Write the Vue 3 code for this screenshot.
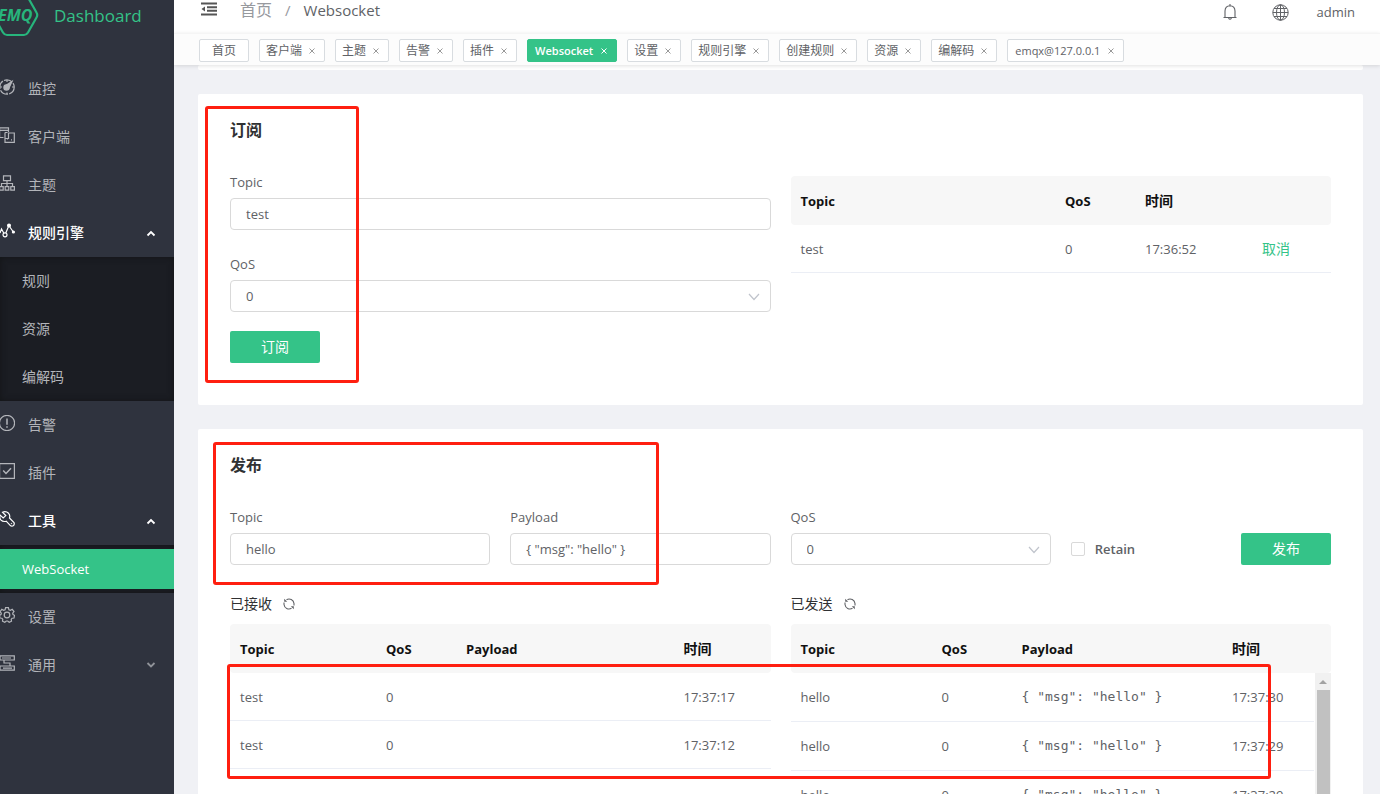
<script setup>
import { ref } from 'vue'

const menuTop = [
  { icon: 'gauge', label: '监控' },
  { icon: 'clients', label: '客户端' },
  { icon: 'topics', label: '主题' },
  { icon: 'rules', label: '规则引擎', open: true, children: [{ label: '规则' }, { label: '资源' }, { label: '编解码' }] },
  { icon: 'alarm', label: '告警' },
  { icon: 'plugins', label: '插件' },
  { icon: 'tools', label: '工具', open: true, children: [{ label: 'WebSocket', active: true }] },
  { icon: 'settings', label: '设置' },
  { icon: 'general', label: '通用', closed: true },
]

const tags = ['客户端', '主题', '告警', '插件', 'Websocket', '设置', '规则引擎', '创建规则', '资源', '编解码', 'emqx@127.0.0.1']
const isLatin = (s) => /^[\x20-\x7e]+$/.test(s)

const subTopic = ref('test')
const subQos = ref('0')
const pubTopic = ref('hello')
const pubPayload = ref('{ "msg": "hello" }')
const pubQos = ref('0')
const retain = ref(false)

const received = [
  { topic: 'test', qos: 0, time: '17:37:17' },
  { topic: 'test', qos: 0, time: '17:37:12' },
]
const sent = [
  { topic: 'hello', qos: 0, payload: '{ "msg": "hello" }', time: '17:37:30' },
  { topic: 'hello', qos: 0, payload: '{ "msg": "hello" }', time: '17:37:29' },
  { topic: 'hello', qos: 0, payload: '{ "msg": "hello" }', time: '17:37:29' },
]
</script>

<template>
  <div class="page">
    <aside class="sidebar">
      <a class="brand" href="#">
        <svg class="logo" width="40" height="37" viewBox="0 0 40 37" aria-hidden="true">
          <path d="M5 -5H24Q26.500 -5 28 -2.500L36.500 12.500Q38 15 36.500 17.500L28 32.500Q26.500 35 24 35H7Q4.500 35 3 32.500L-7 15" fill="none" stroke="#27b57c" stroke-width="2.200" />
          <text x="-2" y="20.500" class="logo-text">EMQ</text>
        </svg>
        <span>Dashboard</span>
      </a>
      <nav>
        <ul class="menu">
          <li v-for="m in menuTop" :key="m.label">
            <a class="item" :class="{ open: m.open }" href="#">
              <svg class="ico" width="16" height="16" viewBox="0 0 16 16" fill="none" stroke="currentColor" stroke-width="1.200">
                <template v-if="m.icon === 'gauge'">
                  <circle cx="8" cy="8" r="7.200" stroke-dasharray="9 1.200" />
                  <circle cx="7.500" cy="8.500" r="2.600" fill="currentColor" />
                  <path d="M6 7L13 2.500L9.500 10Z" fill="currentColor" />
                  <path d="M8 1V3M1 8H3M13 8H15M8 13.500V15" />
                </template>
                <template v-else-if="m.icon === 'clients'">
                  <path d="M4.500 10.500H.6V.8H9.500V5M.6 3.400H9.500M6 5.500H8.500M6 5.500V11" />
                  <path d="M12 6H15.300V15.300H6V11.500H9.500V6H12M8.500 12.500V13M12 12.800H13" />
                </template>
                <template v-else-if="m.icon === 'topics'">
                  <path d="M4.500 .8H11.500V5.600H4.500ZM8 5.600V11.500M2.500 11.500V8.500H13.500V11.500" />
                  <path d="M.6 11.600H4.200V15.200H.6ZM6.200 11.600H9.800V15.200H6.200ZM11.800 11.600H15.400V15.200H11.800Z" />
                </template>
                <template v-else-if="m.icon === 'rules'">
                  <path d="M1 10L2.500 6L5 10.500M6.800 10L9.500 3.500M10.500 3.500L14 8.500" />
                  <circle cx="6" cy="11.800" r="2" />
                  <circle cx="10" cy="2.500" r="1.400" fill="currentColor" />
                  <circle cx="14.400" cy="9" r="1" fill="currentColor" />
                </template>
                <template v-else-if="m.icon === 'alarm'">
                  <circle cx="8" cy="8" r="7.600" />
                  <path d="M8 3.500V9.800M8 11.200V12.800" stroke-width="1.500" />
                </template>
                <template v-else-if="m.icon === 'plugins'">
                  <path d="M.6 .6H15.400V15.400H.6Z" />
                  <path d="M4.200 7.500L7 10.400L12 5.200" stroke-width="1.500" />
                </template>
                <template v-else-if="m.icon === 'tools'">
                  <path d="M3.500 1.200Q7 -.2 9.600 2.300Q11.300 4.200 10.500 7L15 11.600Q15.700 13.200 14.600 14.500Q13 15.700 11.600 14.800L7.200 10.200Q4 11.200 1.800 8.800Q.2 6.800 1 4L4.200 7L6.800 4.600Z" />
                  <path d="M12.200 12.200L12.800 12.800" stroke-width="1.600" />
                </template>
                <template v-else-if="m.icon === 'settings'">
                  <circle cx="8" cy="8" r="2.800" />
                  <path d="M6.600 .7H9.400L9.900 2.700L11.400 3.300L13.200 2.300L15 4.600L13.700 6.200L14 7.500L15.500 8.300L15 11L13.100 11.200L12.200 12.400L12.500 14.200L10.200 15.300L8.700 14H7.300L5.800 15.300L3.500 14.200L3.800 12.400L2.900 11.200L1 11L.5 8.300L2 7.500L2.300 6.200L1 4.600L2.800 2.300L4.600 3.300L6.100 2.700Z" />
                </template>
                <template v-else>
                  <path d="M1 .8H15.300V5H1ZM1 11H15.300V15.200H1ZM5 5V8H11V11M3 3H12M4 13.200H13" />
                </template>
              </svg>
              <span class="label">{{ m.label }}</span>
              <svg v-if="m.open || m.closed" class="arrow" :class="{ dim: m.closed }" width="10" height="10" viewBox="0 0 10 10" fill="none" stroke="currentColor" stroke-width="1.800">
                <path :d="m.open ? 'M1.500 7.500L5 4L8.500 7.500' : 'M1.500 3L5 6.500L8.500 3'" />
              </svg>
            </a>
            <ul v-if="m.children" class="sub">
              <li v-for="c in m.children" :key="c.label">
                <a href="#" :class="{ active: c.active }">{{ c.label }}</a>
              </li>
            </ul>
          </li>
        </ul>
      </nav>
    </aside>

    <div class="main">
      <header class="topbar">
        <button class="plain" type="button" aria-label="menu">
          <svg width="16" height="14" viewBox="0 0 16 14" fill="none" stroke="#555" stroke-width="2">
            <path d="M0 1.500H16M6 5.200H16M6 8.800H16M0 12.500H16" />
            <path d="M4 4.500V9.500L.5 7Z" fill="#555" stroke="none" />
          </svg>
        </button>
        <div class="crumbs">
          <a href="#">首页</a><span class="slash">/</span><span class="here">Websocket</span>
        </div>
        <div class="tools">
          <button class="plain bell" type="button" aria-label="alerts">
            <svg width="16" height="18" viewBox="0 0 16 18" fill="none" stroke="#606266" stroke-width="1.100">
              <path d="M1.500 14.500H14.500M3 14.500V8Q3.200 3 8 2.800Q12.800 3 13 8V14.500M8 1V2.800M6.500 15Q8 17.500 9.500 15" />
            </svg>
          </button>
          <button class="plain" type="button" aria-label="language">
            <svg width="17" height="17" viewBox="0 0 17 17" fill="none" stroke="#606266" stroke-width="1">
              <circle cx="8.500" cy="8.500" r="7.700" />
              <ellipse cx="8.500" cy="8.500" rx="4" ry="7.700" />
              <path d="M8.500 .8V16.200M.8 8.500H16.200M2 4.500H15M2 12.500H15" />
            </svg>
          </button>
          <a class="user" href="#">admin</a>
        </div>
      </header>

      <div class="tags">
        <a class="tag home" href="#">首页</a>
        <a v-for="t in tags" :key="t" class="tag" :class="{ on: t === 'Websocket', latin: isLatin(t) }" href="#">
          {{ t }}
          <svg width="6" height="6" viewBox="0 0 6 6" fill="none" stroke="currentColor" stroke-width="1"><path d="M.5 .5L5.500 5.500M5.500 .5L.5 5.500" /></svg>
        </a>
      </div>

      <main class="content">
        <section class="card stub"></section>

        <section class="card">
          <h2>订阅</h2>
          <div class="halves">
            <form class="fields" @submit.prevent>
              <div class="field">
                <label for="sub-topic">Topic</label>
                <input id="sub-topic" v-model="subTopic" type="text" />
              </div>
              <div class="field">
                <label for="sub-qos">QoS</label>
                <div class="select">
                  <select id="sub-qos" v-model="subQos"><option>0</option><option>1</option><option>2</option></select>
                  <svg width="12" height="8" viewBox="0 0 12 8" fill="none" stroke="#c0c4cc" stroke-width="1.200"><path d="M1 1L6 6.500L11 1" /></svg>
                </div>
              </div>
              <button class="primary" type="submit">订阅</button>
            </form>
            <div class="subs">
              <table>
                <colgroup><col /><col class="c-qos" /><col class="c-when" /><col class="c-act" /></colgroup>
                <thead><tr><th>Topic</th><th>QoS</th><th class="zh">时间</th><th></th></tr></thead>
                <tbody><tr><td>test</td><td>0</td><td>17:36:52</td><td class="zh"><a class="cancel" href="#">取消</a></td></tr></tbody>
              </table>
            </div>
          </div>
        </section>

        <section class="card">
          <h2>发布</h2>
          <form class="quarters" @submit.prevent>
            <div class="field">
              <label for="pub-topic">Topic</label>
              <input id="pub-topic" v-model="pubTopic" type="text" />
            </div>
            <div class="field">
              <label for="pub-payload">Payload</label>
              <input id="pub-payload" v-model="pubPayload" type="text" />
            </div>
            <div class="field">
              <label for="pub-qos">QoS</label>
              <div class="select">
                <select id="pub-qos" v-model="pubQos"><option>0</option><option>1</option><option>2</option></select>
                <svg width="12" height="8" viewBox="0 0 12 8" fill="none" stroke="#c0c4cc" stroke-width="1.200"><path d="M1 1L6 6.500L11 1" /></svg>
              </div>
            </div>
            <div class="send">
              <label class="check" for="retain"><input id="retain" v-model="retain" type="checkbox" />Retain</label>
              <button class="primary" type="submit">发布</button>
            </div>
          </form>

          <div class="halves logs">
            <div>
              <h3>已接收
                <button class="plain" type="button" aria-label="refresh">
                  <svg width="12" height="12" viewBox="0 0 12 12" fill="none" stroke="#606266" stroke-width="1.100"><path d="M3.500 1.700A5 5 0 0 1 11 5.500M8.500 10.300A5 5 0 0 1 1 6.500V4.500M11 5.500V7.500" /><path d="M1.200 .8V3.800H4.200ZM10.800 11.200V8.200H7.800Z" fill="#606266" stroke="none" /></svg>
                </button>
              </h3>
              <table>
                <colgroup><col class="c-topic" /><col class="c-qos" /><col /><col class="c-time" /></colgroup>
                <thead><tr><th>Topic</th><th>QoS</th><th>Payload</th><th class="zh">时间</th></tr></thead>
                <tbody>
                  <tr v-for="r in received" :key="r.time"><td>{{ r.topic }}</td><td>{{ r.qos }}</td><td></td><td>{{ r.time }}</td></tr>
                </tbody>
              </table>
            </div>
            <div>
              <h3>已发送
                <button class="plain" type="button" aria-label="refresh">
                  <svg width="12" height="12" viewBox="0 0 12 12" fill="none" stroke="#606266" stroke-width="1.100"><path d="M3.500 1.700A5 5 0 0 1 11 5.500M8.500 10.300A5 5 0 0 1 1 6.500V4.500M11 5.500V7.500" /><path d="M1.200 .8V3.800H4.200ZM10.800 11.200V8.200H7.800Z" fill="#606266" stroke="none" /></svg>
                </button>
              </h3>
              <table>
                <colgroup><col class="c-topic2" /><col class="c-qos" /><col /><col class="c-time2" /><col class="c-gutter" /></colgroup>
                <thead><tr><th>Topic</th><th>QoS</th><th>Payload</th><th class="zh">时间</th><th></th></tr></thead>
              </table>
              <div class="scroller">
                <table class="tall">
                  <colgroup><col class="c-topic2" /><col class="c-qos" /><col /><col class="c-time2" /></colgroup>
                  <tbody>
                    <tr v-for="(r, i) in sent" :key="i"><td>{{ r.topic }}</td><td>{{ r.qos }}</td><td class="mono">{{ r.payload }}</td><td>{{ r.time }}</td></tr>
                  </tbody>
                </table>
                <div class="bar">
                  <svg width="16" height="17" viewBox="0 0 16 17"><path d="M4 11H12L8 7Z" fill="#a3a3a3" /></svg>
                  <div class="thumb"></div>
                </div>
              </div>
            </div>
          </div>
        </section>
      </main>
    </div>

    <div class="mark mark-sub"></div>
    <div class="mark mark-pub"></div>
    <div class="mark mark-log"></div>
  </div>
</template>

<style>
body {
  margin: 0;
}
</style>

<style scoped>
* {
  box-sizing: border-box;
}
.page {
  position: relative;
  display: flex;
  height: 100vh;
  overflow: hidden;
  background: #f0f1f5;
  color: #606266;
  font: 13px/24px "Open Sans", "Noto Sans CJK SC", sans-serif;
}
a {
  color: inherit;
  text-decoration: none;
}
ul {
  margin: 0;
  padding: 0;
  list-style: none;
}
button,
input,
select {
  font: inherit;
  color: inherit;
}
.plain {
  display: inline-flex;
  padding: 0;
  border: 0;
  background: none;
}

.sidebar {
  flex: none;
  width: 174px;
  overflow: hidden;
  background: #2f333e;
  color: #b3b5ba;
  font-size: 14px;
}
.brand {
  display: flex;
  gap: 14px;
  height: 65px;
  color: #34c388;
  font-size: 17px;
  line-height: 32px;
}
.logo-text {
  fill: #27b57c;
  font: italic 700 16px "Open Sans", sans-serif;
}
.item {
  display: flex;
  align-items: center;
  height: 48px;
  padding-right: 18px;
}
.item.open {
  color: #fff;
}
.ico {
  flex: none;
  margin: 0 13px 4px -1px;
}
.label {
  flex: 1;
}
.item.open .label {
  font-weight: 500;
}
.arrow.dim {
  color: #909399;
}
.sub {
  background: #1b1d23;
  box-shadow: inset 0 0 6px #131417;
}
.sub li {
  padding: 4px 0;
}
.sub a {
  display: block;
  padding-left: 22px;
  line-height: 40px;
}
.sub .active {
  background: #34c388;
  color: #fff;
  font-size: 13px;
}

.main {
  flex: 1;
  display: flex;
  flex-direction: column;
  min-width: 0;
}
.topbar {
  display: flex;
  align-items: flex-start;
  flex: none;
  height: 33px;
  padding: 2px 25px 0 27px;
  background: #fff;
}
.crumbs {
  display: flex;
  margin-left: 23px;
  font-size: 15px;
  line-height: 16px;
}
.crumbs a {
  color: #97999e;
  font-size: 16px;
}
.slash {
  margin: 0 13px;
  color: #97999e;
}
.tools {
  display: flex;
  align-items: center;
  gap: 28px;
  margin-left: auto;
}
.bell {
  margin-right: 6px;
}
.user {
  line-height: 20px;
}
.tags {
  position: relative;
  display: flex;
  align-items: center;
  gap: 10px;
  flex: none;
  height: 32px;
  padding: 2px 25px 0;
  border-top: 1px solid #f5f5f5;
  background: #fcfcfc;
  box-shadow: 0 1px 4px rgba(0, 0, 0, 0.12);
}
.tag {
  display: flex;
  align-items: center;
  gap: 7px;
  height: 23px;
  padding: 0 9px 0 6px;
  border: 1px solid #d8dce0;
  border-radius: 2px;
  background: #fff;
  font-size: 12px;
  line-height: 20px;
  white-space: nowrap;
}
.tag svg {
  color: #999;
}
.tag.home {
  padding: 0 12px;
}
.tag.latin {
  gap: 8px;
  padding-left: 7px;
  font-size: 11px;
}
.tag.on {
  border-color: #34c388;
  background: #34c388;
  color: #fff;
  font-weight: 600;
}
.tag.on svg {
  color: #fff;
}

.content {
  display: flex;
  flex-direction: column;
  gap: 24px;
  flex: 1;
  min-height: 0;
  overflow: hidden;
  padding: 0 17px 0 24px;
}
.card {
  flex: none;
  padding: 24px 32px 42px;
  border-radius: 2px;
  background: #fff;
}
.card.stub {
  height: 5px;
  padding: 0;
}
h2 {
  margin: 0 0 28px;
  color: #303133;
  font-size: 16px;
  font-weight: 700;
  line-height: 24px;
}
h3 {
  display: flex;
  align-items: center;
  gap: 11px;
  margin: 0 0 8px;
  color: #303133;
  font-size: 14px;
  font-weight: 400;
  line-height: 24px;
}
.halves {
  display: grid;
  grid-template-columns: 1fr 1fr;
  gap: 20px;
}
.quarters {
  display: grid;
  grid-template-columns: repeat(4, 1fr);
  gap: 20px;
}
.field label {
  display: block;
  margin-bottom: 4px;
}
.fields .field {
  margin-bottom: 22px;
}
.fields .field:nth-child(2) {
  margin-bottom: 19px;
}
.field input,
.select select {
  display: block;
  width: 100%;
  height: 32px;
  padding: 0 15px;
  border: 1px solid #d9d9d9;
  border-radius: 4px;
  background: #fff;
  appearance: none;
  outline: none;
}
.select {
  position: relative;
}
.select svg {
  position: absolute;
  top: 13px;
  right: 11px;
}
.primary {
  width: 90px;
  height: 32px;
  padding: 0;
  border: 0;
  border-radius: 2px;
  background: #34c388;
  color: #fff;
  font-size: 14px;
}
.fields .primary {
  display: block;
}
.subs {
  padding-top: 6px;
}
.send {
  display: flex;
  align-items: center;
  justify-content: space-between;
  align-self: end;
}
.check {
  display: flex;
  align-items: center;
  gap: 10px;
  font-weight: 600;
}
.check input {
  width: 14px;
  height: 14px;
  margin: 0;
  border: 1px solid #d9d9d9;
  border-radius: 2px;
  background: #fff;
  appearance: none;
}
.check input:checked {
  background: #34c388;
}
.logs {
  margin-top: 27px;
}

table {
  width: 100%;
  border-collapse: separate;
  border-spacing: 0;
  table-layout: fixed;
}
th,
td {
  height: 48px;
  padding: 0 10px;
  text-align: left;
  white-space: nowrap;
}
th {
  height: 49px;
  background: #f7f7f7;
  color: #111;
  font-weight: 700;
}
th:first-child {
  border-radius: 4px 0 0 4px;
}
th:last-child {
  border-radius: 0 4px 4px 0;
}
td {
  border-bottom: 1px solid #ebeef5;
}
.tall td {
  height: 49px;
}
.zh {
  font-size: 14px;
}
.mono {
  font-family: "DejaVu Sans Mono", monospace;
}
.cancel {
  color: #34c388;
}
.c-qos {
  width: 80px;
}
.c-when {
  width: 117px;
}
.c-act {
  width: 79px;
}
.c-topic {
  width: 146px;
}
.c-time {
  width: 97px;
}
.c-topic2 {
  width: 141px;
}
.c-time2 {
  width: 92px;
}
.c-gutter {
  width: 17px;
}
.scroller {
  display: flex;
  gap: 1px;
  height: 200px;
  overflow: hidden;
}
.scroller table {
  flex: 1;
  min-width: 0;
  align-self: flex-start;
}
.bar {
  display: flex;
  flex-direction: column;
  flex: none;
  width: 16px;
  background: #f1f1f1;
}
.thumb {
  flex: 1;
  margin: 0 1px 0 2px;
  background: #c1c1c1;
}

.mark {
  position: absolute;
  border: 3px solid #ff1f10;
  border-radius: 3px;
  pointer-events: none;
}
.mark-sub {
  left: 205px;
  top: 106px;
  width: 154px;
  height: 277px;
}
.mark-pub {
  left: 213px;
  top: 442px;
  width: 446px;
  height: 143px;
}
.mark-log {
  left: 227px;
  top: 664px;
  width: 1044px;
  height: 115px;
}
</style>
